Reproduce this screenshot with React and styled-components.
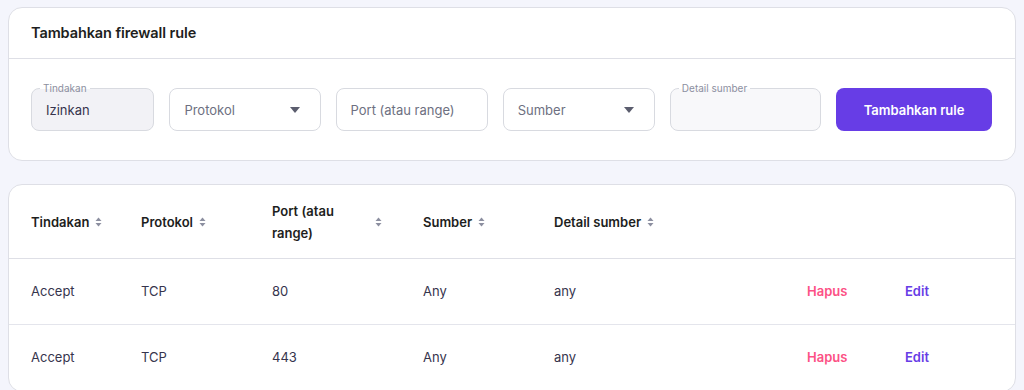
import React from "react";
import styled, { createGlobalStyle } from "styled-components";

const GlobalStyle = createGlobalStyle`
  * { box-sizing: border-box; }
  body {
    margin: 0;
    background: #f4f5fc;
    font-family: "Inter", "DejaVu Sans", sans-serif;
    color: #1d1e20;
  }
`;

const Page = styled.div`
  padding: 7px 8px 0 8px;
  display: flex;
  flex-direction: column;
  gap: 23px;
`;

const Card = styled.div`
  background: #fff;
  border: 1px solid #dedfe6;
  border-radius: 14px;
  overflow: hidden;
`;

const CardHeader = styled.div`
  height: 51px;
  padding: 0 22px 2px;
  display: flex;
  align-items: center;
  border-bottom: 1px solid #dedfe6;
  font-size: 14.5px;
  font-weight: 600;
  letter-spacing: -0.1px;
`;

const FormRow = styled.div`
  display: flex;
  align-items: center;
  gap: 15px;
  padding: 29px 23px 29px 22px;
`;

const Field = styled.div`
  position: relative;
  width: ${({ w }) => w}px;
  height: 43px;
  border: 1px solid #d8dae0;
  border-radius: 8px;
  background: ${({ bg }) => bg || "#fff"};
  display: flex;
  align-items: center;
  justify-content: space-between;
  padding: 0 20px 0 14px;
  font-size: 13px;
  color: ${({ muted }) => (muted ? "#6d7081" : "#36344d")};
`;

const FloatLabel = styled.span`
  position: absolute;
  top: -8px;
  left: 8px;
  padding: 0 3px;
  font-size: 10px;
  line-height: 14px;
  color: #8c8fa0;
  background: linear-gradient(to bottom, #fff 55%, ${({ bg }) => bg} 55%);
`;

const Caret = styled.span`
  width: 0;
  height: 0;
  border-left: 5px solid transparent;
  border-right: 5px solid transparent;
  border-top: 6px solid #5b5d6e;
`;

const PrimaryButton = styled.button`
  width: 157px;
  height: 43px;
  border: none;
  border-radius: 8px;
  background: #673de6;
  color: #fff;
  font-family: inherit;
  font-size: 13px;
  font-weight: 600;
`;

const cols = "110px 131px 151px 131px 253px 98px 1fr";

const TableHead = styled.div`
  display: grid;
  grid-template-columns: ${cols};
  align-items: center;
  height: 74px;
  padding: 0 22px;
  border-bottom: 1px solid #dedfe6;
  font-size: 13px;
  font-weight: 600;
  color: #1d1e20;
`;

const HeadCell = styled.div`
  display: flex;
  align-items: center;
  gap: 6px;
  ${({ wide }) => wide && "width: 110px; justify-content: space-between;"}
`;

const HeadText = styled.span`
  line-height: 22px;
  ${({ wrap }) => wrap && "max-width: 80px;"}
`;

const Row = styled.div`
  display: grid;
  grid-template-columns: ${cols};
  align-items: center;
  height: 66px;
  padding: 0 22px 2px;
  border-bottom: 1px solid #e4e5ec;
  font-size: 13px;
  color: #36344d;
`;

const ActionLink = styled.span`
  font-weight: 600;
  color: ${({ danger }) => (danger ? "#fc5185" : "#673de6")};
`;

const SortIcon = () => (
  <svg width="7" height="10" viewBox="0 0 7 10">
    <path d="M3.5 0.5L6.5 4H0.5z" fill="#8c8fa0" />
    <path d="M3.5 9.5L0.5 6H6.5z" fill="#8c8fa0" />
  </svg>
);

const rules = [
  { action: "Accept", proto: "TCP", port: "80", src: "Any", detail: "any" },
  { action: "Accept", proto: "TCP", port: "443", src: "Any", detail: "any" },
];

export default function App() {
  return (
    <>
      <GlobalStyle />
      <Page>
        <Card>
          <CardHeader>Tambahkan firewall rule</CardHeader>
          <FormRow>
            <Field w={124} bg="#f2f2f6">
              <FloatLabel bg="#f2f2f6">Tindakan</FloatLabel>
              Izinkan
            </Field>
            <Field w={152} muted>
              Protokol
              <Caret />
            </Field>
            <Field w={153} muted>
              Port (atau range)
            </Field>
            <Field w={153} muted>
              Sumber
              <Caret />
            </Field>
            <Field w={152} bg="#f8f8fa">
              <FloatLabel bg="#f8f8fa">Detail sumber</FloatLabel>
            </Field>
            <PrimaryButton>Tambahkan rule</PrimaryButton>
          </FormRow>
        </Card>
        <Card>
          <TableHead>
            <HeadCell>
              <HeadText>Tindakan</HeadText>
              <SortIcon />
            </HeadCell>
            <HeadCell>
              <HeadText>Protokol</HeadText>
              <SortIcon />
            </HeadCell>
            <HeadCell wide>
              <HeadText wrap>Port (atau range)</HeadText>
              <SortIcon />
            </HeadCell>
            <HeadCell>
              <HeadText>Sumber</HeadText>
              <SortIcon />
            </HeadCell>
            <HeadCell>
              <HeadText>Detail sumber</HeadText>
              <SortIcon />
            </HeadCell>
            <div />
            <div />
          </TableHead>
          {rules.map((r, i) => (
            <Row key={i}>
              <span>{r.action}</span>
              <span>{r.proto}</span>
              <span>{r.port}</span>
              <span>{r.src}</span>
              <span>{r.detail}</span>
              <ActionLink danger>Hapus</ActionLink>
              <ActionLink>Edit</ActionLink>
            </Row>
          ))}
        </Card>
      </Page>
    </>
  );
}
